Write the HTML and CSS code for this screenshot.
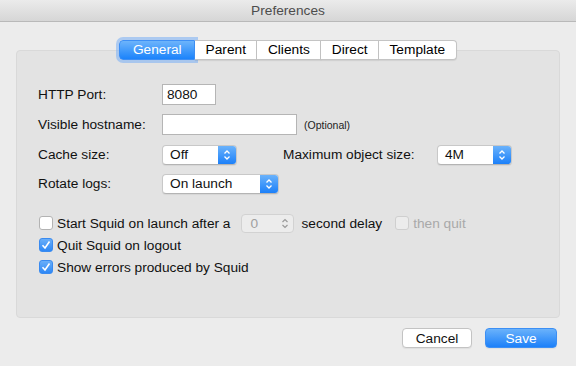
FILE: index.html
```html
<!DOCTYPE html>
<html lang="en">
<head>
    <meta charset="UTF-8">
    <title>Preferences</title>
    <link rel="stylesheet" href="styles.css">
</head>
<body>
    <div class="window">
        <div class="titlebar">Preferences</div>

        <div class="content">
            <div class="tabs">
                <span class="tab active">General</span>
                <span class="tab">Parent</span>
                <span class="tab">Clients</span>
                <span class="tab">Direct</span>
                <span class="tab last">Template</span>
            </div>

            <div class="panel">
                <div class="form">
                    <div class="row">
                        <span class="label">HTTP Port:</span>
                        <span class="field port">8080</span>
                    </div>
                    <div class="row">
                        <span class="label">Visible hostname:</span>
                        <span class="field host"></span>
                        <span class="hint">(Optional)</span>
                    </div>
                    <div class="row">
                        <span class="label">Cache size:</span>
                        <span class="popup cache">
                            <span class="popup-text">Off</span>
                            <span class="popup-arrow">
                                <svg width="18" height="20" viewBox="0 0 18 20"><path d="M6.5 8.5 L9 6 L11.5 8.5 M6.5 11.5 L9 14 L11.5 11.5" fill="none" stroke="#fff" stroke-width="1.3"/></svg>
                            </span>
                        </span>
                        <span class="label-inline">Maximum object size:</span>
                        <span class="popup objsize">
                            <span class="popup-text">4M</span>
                            <span class="popup-arrow">
                                <svg width="18" height="20" viewBox="0 0 18 20"><path d="M6.5 8.5 L9 6 L11.5 8.5 M6.5 11.5 L9 14 L11.5 11.5" fill="none" stroke="#fff" stroke-width="1.3"/></svg>
                            </span>
                        </span>
                    </div>
                    <div class="row">
                        <span class="label">Rotate logs:</span>
                        <span class="popup rotate">
                            <span class="popup-text">On launch</span>
                            <span class="popup-arrow">
                                <svg width="18" height="20" viewBox="0 0 18 20"><path d="M6.5 8.5 L9 6 L11.5 8.5 M6.5 11.5 L9 14 L11.5 11.5" fill="none" stroke="#fff" stroke-width="1.3"/></svg>
                            </span>
                        </span>
                    </div>
                </div>

                <div class="options">
                    <div class="option">
                        <span class="check"></span>
                        <span>Start Squid on launch after a</span>
                        <span class="stepper">
                            <span class="stepper-text">0</span>
                            <svg width="12" height="19" viewBox="0 0 12 19"><path d="M3.5 8 L6 5.5 L8.5 8 M3.5 11 L6 13.5 L8.5 11" fill="none" stroke="#9a9a9a" stroke-width="1.2"/></svg>
                        </span>
                        <span>second delay</span>
                        <span class="check disabled"></span>
                        <span class="muted">then quit</span>
                    </div>
                    <div class="option">
                        <span class="check on">
                            <svg width="14" height="14" viewBox="0 0 14 14"><path d="M3.5 7.2 L6 10 L10.5 3.5" fill="none" stroke="#fff" stroke-width="1.6"/></svg>
                        </span>
                        <span>Quit Squid on logout</span>
                    </div>
                    <div class="option">
                        <span class="check on">
                            <svg width="14" height="14" viewBox="0 0 14 14"><path d="M3.5 7.2 L6 10 L10.5 3.5" fill="none" stroke="#fff" stroke-width="1.6"/></svg>
                        </span>
                        <span>Show errors produced by Squid</span>
                    </div>
                </div>
            </div>

            <div class="actions">
                <button class="btn">Cancel</button>
                <button class="btn primary">Save</button>
            </div>
        </div>
    </div>
</body>
</html>
```

FILE: styles.css
```css
body {
    margin: 0;
    padding: 0;
    font-family: "Liberation Sans", Arial, sans-serif;
    font-size: 13.7px;
    color: #111;
}

.window {
    width: 576px;
    height: 366px;
    background: #ececec;
    overflow: hidden;
}

.titlebar {
    height: 22px;
    box-sizing: border-box;
    border-bottom: 1px solid #b9b9b9;
    background: linear-gradient(#ebebeb, #d6d6d6);
    color: #4d4d4d;
    text-align: center;
    line-height: 22px;
}

.content {
    padding: 0 16px;
}

.tabs {
    display: flex;
    justify-content: center;
    margin-top: 18px;
    height: 20px;
    position: relative;
    z-index: 1;
}

.tab {
    height: 20px;
    box-sizing: border-box;
    background: #fff;
    border: 1px solid #c4c4c4;
    border-left: none;
    padding: 0 10.5px;
    line-height: 18px;
    color: #000;
    box-shadow: 0 1px 1px rgba(0, 0, 0, 0.08);
}

.tab.last {
    border-radius: 0 4px 4px 0;
}

.tab.active {
    background: linear-gradient(#6db4fb, #1b83fb);
    border: 1px solid #3d8ff5;
    border-radius: 4px 0 0 4px;
    color: #fff;
    padding: 0 12.5px;
    box-shadow: 0 0 0 3px rgba(120, 175, 245, 0.55);
}

.panel {
    margin-top: -10px;
    height: 268px;
    box-sizing: border-box;
    background: #e3e3e3;
    border: 1px solid #d9d9d9;
    border-radius: 4px;
    padding: 33px 0 0 21px;
}

.form {
    display: flex;
    flex-direction: column;
    gap: 9px;
}

.row {
    display: flex;
    align-items: center;
    height: 21px;
}

.row:last-child {
    margin-top: -1px;
}

.label {
    width: 124px;
}

.field {
    height: 21px;
    box-sizing: border-box;
    background: #fff;
    border: 1px solid #b5b5b5;
    padding: 0 4px;
    line-height: 19px;
}

.port {
    width: 54px;
}

.host {
    width: 135px;
}

.hint {
    margin-left: 7px;
    font-size: 10.5px;
    color: #222;
}

.popup {
    display: flex;
    height: 20px;
    box-sizing: border-box;
    background: #fff;
    border: 1px solid #c8c8c8;
    border-bottom-color: #b4b4b4;
    border-radius: 4px;
    box-shadow: 0 1px 1px rgba(0, 0, 0, 0.06);
    overflow: hidden;
}

.popup-text {
    flex: 1;
    padding-left: 7px;
    line-height: 18px;
}

.popup-arrow {
    width: 18px;
    background: linear-gradient(#6ab2fb, #1c80f9);
    display: flex;
    align-items: center;
    justify-content: center;
}

.cache {
    width: 75px;
}

.objsize {
    width: 75px;
}

.rotate {
    width: 117px;
}

.label-inline {
    margin-left: 46px;
    width: 154px;
}

.options {
    margin-top: 18px;
    display: flex;
    flex-direction: column;
}

.option {
    display: flex;
    align-items: center;
    height: 22px;
    padding-left: 1px;
}

.check {
    width: 14px;
    height: 14px;
    box-sizing: border-box;
    background: #fff;
    border: 1px solid #b3b3b3;
    border-radius: 3px;
    margin-right: 4px;
    display: flex;
}

.check svg {
    margin: -1px;
}

.check.on {
    background: linear-gradient(#6aaff9, #2d87f5);
    border-color: #3a8bf0;
}

.check.disabled {
    border-color: #cfcfcf;
    background: #ececec;
    margin-left: 13px;
}

.muted {
    color: #a9a9a9;
}

.stepper {
    display: flex;
    align-items: center;
    width: 53px;
    height: 19px;
    box-sizing: border-box;
    background: #ececec;
    border: 1px solid #d2d2d2;
    border-radius: 4px;
    margin: 0 8px 0 10px;
    padding: 0 2px 0 9px;
}

.stepper-text {
    flex: 1;
    color: #a0a0a0;
}

.actions {
    display: flex;
    justify-content: flex-end;
    gap: 13px;
    margin-top: 10px;
    padding-right: 3px;
}

.btn {
    height: 20px;
    box-sizing: border-box;
    font-family: inherit;
    font-size: 13.7px;
    padding: 0;
    background: #fff;
    border: 1px solid #c3c3c3;
    border-radius: 4px;
    color: #111;
    width: 70px;
    box-shadow: 0 1px 1px rgba(0, 0, 0, 0.06);
}

.btn.primary {
    width: 72px;
    background: linear-gradient(#6ab2fb, #1c80f9);
    border-color: #3c8ff4;
    color: #fff;
}
```
